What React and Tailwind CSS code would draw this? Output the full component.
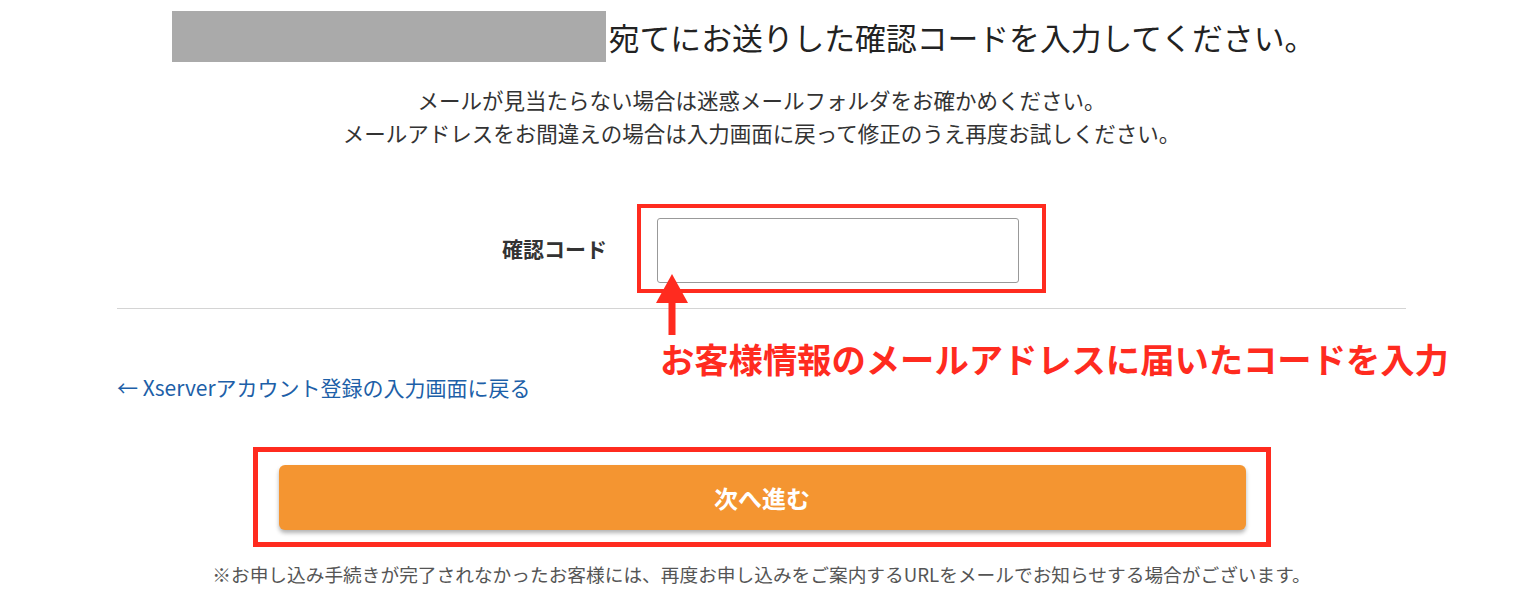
import React from 'react';

const jp = "font-['Hiragino_Sans','Noto_Sans_CJK_JP',sans-serif]";

const RedArrow = () => (
  <svg width="34" height="61" viewBox="0 0 34 61" className="block">
    <polygon points="17,0 1,29 33,29" fill="#ff2b1f" />
    <rect x="13.5" y="27" width="7" height="34" fill="#ff2b1f" />
  </svg>
);

const App = () => {
  return (
    <div className={`min-h-screen bg-white text-[#333] ${jp}`}>
      <div className="relative ml-[117px] w-[1289px]">
        {/* Heading */}
        <div className="flex items-center justify-center pt-[11px] pr-[36px]">
          <div className="h-[51px] w-[434px] bg-[#aaaaaa]" />
          <h1 className="ml-[3px] text-[30.8px] leading-[40px] text-[#222]">
            宛てにお送りした確認コードを入力してください。
          </h1>
        </div>

        <div className="mt-[21px] text-center text-[21.5px] leading-[33px] text-[#333]">
          <p>メールが見当たらない場合は迷惑メールフォルダをお確かめください。</p>
          <p>メールアドレスをお間違えの場合は入力画面に戻って修正のうえ再度お試しください。</p>
        </div>

        {/* Code input row */}
        <div className="mt-[55px] flex items-center">
          <label className="w-[490px] text-right text-[21px] font-bold text-[#333]">確認コード</label>
          <div className="ml-[30px] border-[4px] border-[#ff2b1f] pt-[10px] pb-[6px] pl-[16px] pr-[23px]">
            <input
              type="text"
              className="block h-[65px] w-[362px] rounded-[3px] border border-[#999] bg-white px-3 outline-none"
            />
          </div>
        </div>

        <div className="mt-[15px] border-t border-[#d4d4d4]" />

        {/* Annotation */}
        <div className="absolute left-[538px] top-[274px]">
          <RedArrow />
        </div>
        <div className="absolute left-[543px] top-[338px] text-[34.3px] font-bold leading-[40px] text-[#ff2b1f] whitespace-nowrap">
          お客様情報のメールアドレスに届いたコードを入力
        </div>

        <div className="mt-[63px]">
          <a href="#" className="text-[21px] leading-[30px] text-[#1d5fa8]">
            ← Xserverアカウント登録の入力画面に戻る
          </a>
        </div>

        {/* Submit */}
        <div className="mx-auto mt-[45px] w-[1018px] border-[5px] border-[#ff2b1f] pt-[13px] pb-[12px] pl-[21px] pr-[20px]">
          <button className="flex h-[65px] w-full items-center justify-center rounded-[6px] bg-[#f49531] text-[24px] font-bold text-white shadow-[0_3px_4px_rgba(0,0,0,0.3)]">
            次へ進む
          </button>
        </div>

        <p className="mt-[14px] text-center text-[18.7px] leading-[26px] text-[#555]">
          ※お申し込み手続きが完了されなかったお客様には、再度お申し込みをご案内するURLをメールでお知らせする場合がございます。
        </p>
      </div>
    </div>
  );
};

export default App;
